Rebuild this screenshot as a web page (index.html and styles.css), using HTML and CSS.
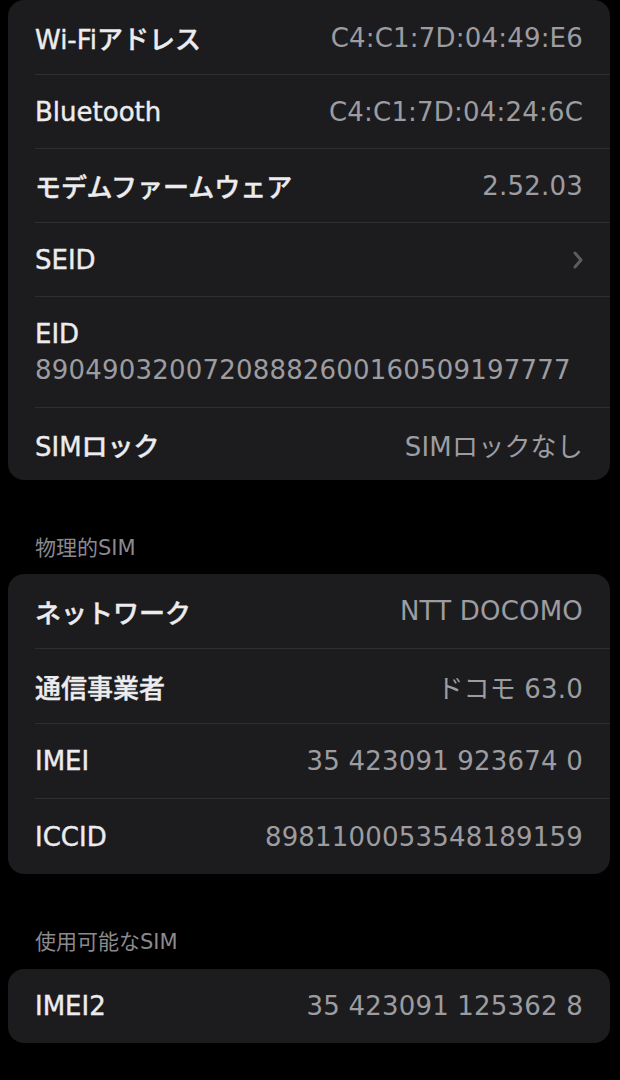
FILE: index.html
```html
<!DOCTYPE html>
<html lang="ja">
<head>
    <meta charset="utf-8">
    <title>情報</title>
    <link rel="stylesheet" href="styles.css">
</head>
<body>
<div class="container">
    <div class="group first">
        <div class="row">
            <span class="label">Wi-Fiアドレス</span>
            <span class="value">C4:C1:7D:04:49:E6</span>
        </div>
        <div class="row">
            <span class="label">Bluetooth</span>
            <span class="value">C4:C1:7D:04:24:6C</span>
        </div>
        <div class="row">
            <span class="label">モデムファームウェア</span>
            <span class="value">2.52.03</span>
        </div>
        <div class="row">
            <span class="label">SEID</span>
            <svg class="chevron" width="12" height="20" viewBox="0 0 12 20">
                <path d="M3 3 L9 10 L3 17" fill="none" stroke="#5c5c60" stroke-width="3" stroke-linecap="round" stroke-linejoin="round"/>
            </svg>
        </div>
        <div class="row tall">
            <span class="label">EID</span>
            <span class="value">89049032007208882600160509197777</span>
        </div>
        <div class="row">
            <span class="label">SIMロック</span>
            <span class="value">SIMロックなし</span>
        </div>
    </div>

    <h3 class="header">物理的SIM</h3>
    <div class="group">
        <div class="row">
            <span class="label">ネットワーク</span>
            <span class="value">NTT DOCOMO</span>
        </div>
        <div class="row">
            <span class="label">通信事業者</span>
            <span class="value">ドコモ 63.0</span>
        </div>
        <div class="row">
            <span class="label">IMEI</span>
            <span class="value">35 423091 923674 0</span>
        </div>
        <div class="row">
            <span class="label">ICCID</span>
            <span class="value">8981100053548189159</span>
        </div>
    </div>

    <h3 class="header">使用可能なSIM</h3>
    <div class="group last">
        <div class="row">
            <span class="label">IMEI2</span>
            <span class="value">35 423091 125362 8</span>
        </div>
    </div>
</div>
</body>
</html>
```

FILE: styles.css
```css
* {
    box-sizing: border-box;
}
body {
    margin: 0;
    background-color: #000;
    font-family: "DejaVu Sans", "Noto Sans CJK JP", sans-serif;
}
.container {
    padding: 0 10px 0 8px;
}
.group {
    background-color: #1c1c1e;
    border-radius: 16px;
    padding-left: 27px;
}
.row {
    display: flex;
    justify-content: space-between;
    align-items: center;
    height: 75px;
    padding-right: 27px;
    border-bottom: 1px solid #2e2e31;
}
.row:last-child {
    border-bottom: none;
}
.first {
    padding-top: 1px;
}
.first .row {
    height: 74px;
}
.first .row:last-child {
    height: 72px;
}
.last .row {
    height: 74px;
}
.row.tall {
    height: 111px;
    flex-direction: column;
    align-items: flex-start;
    justify-content: center;
    gap: 6px;
}
.label {
    font-size: 26px;
    font-weight: 500;
    color: #ececee;
    -webkit-text-stroke: 0.4px #ececee;
}
.value {
    font-size: 26px;
    color: #9c9ca1;
    letter-spacing: 0.2px;
}
.chevron {
    margin-right: -1px;
}
.header {
    margin: 0;
    padding: 56px 0 13px 27px;
    font-size: 21px;
    font-weight: 400;
    color: #8a8a8e;
    line-height: 25px;
}
.last {
    margin-top: 1px;
}
```
